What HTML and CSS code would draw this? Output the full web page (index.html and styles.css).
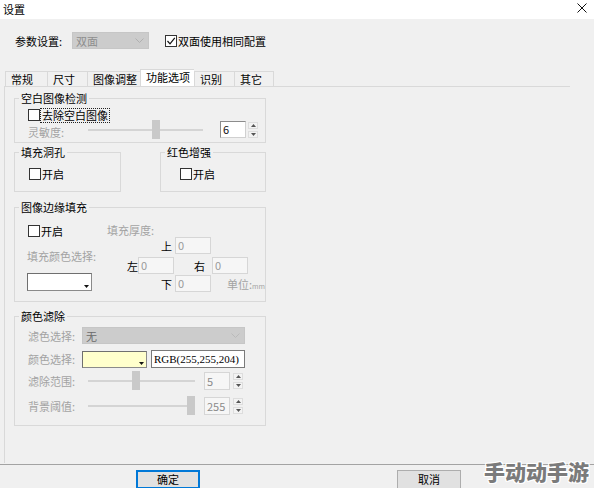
FILE: index.html
```html
<!DOCTYPE html>
<html lang="zh-CN">
<head>
<meta charset="utf-8">
<title>设置</title>
<link rel="stylesheet" href="styles.css">
</head>
<body>
<div class="titlebar">
  <span class="title">设置</span>
  <svg class="close" width="10" height="10" viewBox="0 0 10 10"><path d="M0.5 0.5 L9.5 9.5 M9.5 0.5 L0.5 9.5" stroke="#111" stroke-width="1" fill="none"/></svg>
</div>

<div class="params">
  <span class="plabel">参数设置:</span>
  <div class="combo combo-params"><span>双面</span><svg class="chev" width="9" height="5" viewBox="0 0 9 5"><path d="M0.5 0.5 L4.5 4.5 L8.5 0.5" stroke="#b0b0b0" fill="none"/></svg></div>
  <div class="check check-params"><span class="box"><svg width="10" height="10" viewBox="0 0 10 10"><path d="M1.5 5 L4 7.8 L8.8 1.8" stroke="#111" stroke-width="1.2" fill="none"/></svg></span><span>双面使用相同配置</span></div>
</div>

<div class="tabs">
  <div class="tab tw42">常规</div>
  <div class="tab tw40">尺寸</div>
  <div class="tab tw53">图像调整</div>
  <div class="tab tab-active tw54">功能选项</div>
  <div class="tab tw40">识别</div>
  <div class="tab tab-last tw40">其它</div>
</div>

<div class="panel">
  <fieldset class="group g-blank">
    <legend>空白图像检测</legend>
    <div class="cbrow cb-blank"><span class="box"></span><span class="focus">去除空白图像</span></div>
    <div class="sens">
      <span class="lbl dis sens-lbl">灵敏度:</span>
      <div class="slider slider-sens"><span class="thumb" style="margin-left:64px"></span></div>
      <div class="spin spin-sens">
        <span class="spin-input spin-active">6</span>
        <span class="spin-btns"><span class="sbtn"><svg width="5" height="3" viewBox="0 0 5 3"><path d="M0 3 L2.5 0 L5 3Z" fill="#555"/></svg></span><span class="sbtn"><svg width="5" height="3" viewBox="0 0 5 3"><path d="M0 0 L2.5 3 L5 0Z" fill="#555"/></svg></span></span>
      </div>
    </div>
  </fieldset>

  <div class="pair">
    <fieldset class="group g-hole">
      <legend>填充洞孔</legend>
      <div class="cbrow cb-hole"><span class="box"></span><span>开启</span></div>
    </fieldset>
    <fieldset class="group g-red">
      <legend>红色增强</legend>
      <div class="cbrow cb-red"><span class="box"></span><span>开启</span></div>
    </fieldset>
  </div>

  <fieldset class="group g-edge">
    <legend>图像边缘填充</legend>
    <div class="edge">
      <div class="edge-left">
        <div class="cbrow cb-edge"><span class="box"></span><span>开启</span></div>
        <div class="dis edge-color-lbl">填充颜色选择:</div>
        <div class="colorbox colorbox-white"><svg class="tri" width="5" height="3" viewBox="0 0 5 3"><path d="M0 0 L2.5 3 L5 0Z" fill="#111"/></svg></div>
      </div>
      <div class="edge-right">
        <div class="dis thick-lbl">填充厚度:</div>
        <div class="xrow xrow-top"><span class="xl">上</span><span class="tin tin-a">0</span></div>
        <div class="xrow xrow-mid"><span class="xl">左</span><span class="tin">0</span><span class="xl xl-right">右</span><span class="tin tin-r">0</span></div>
        <div class="xrow xrow-bot"><span class="xl">下</span><span class="tin tin-a">0</span><span class="dis unit">单位:<small>mm</small></span></div>
      </div>
    </div>
  </fieldset>

  <fieldset class="group g-filter">
    <legend>颜色滤除</legend>
    <div class="frow frow1">
      <span class="lbl dis flbl">滤色选择:</span>
      <div class="combo combo-filter"><span>无</span><svg class="chev" width="9" height="5" viewBox="0 0 9 5"><path d="M0.5 0.5 L4.5 4.5 L8.5 0.5" stroke="#bababa" fill="none"/></svg></div>
    </div>
    <div class="frow frow2">
      <span class="lbl dis flbl">颜色选择:</span>
      <div class="colorbox colorbox-yellow"><svg class="tri" width="5" height="3" viewBox="0 0 5 3"><path d="M0 0 L2.5 3 L5 0Z" fill="#111"/></svg></div>
      <span class="rgb">RGB(255,255,204)</span>
    </div>
    <div class="frow frow3">
      <span class="lbl dis slbl">滤除范围:</span>
      <div class="slider slider-f"><span class="thumb" style="margin-left:44px"></span></div>
      <div class="spin spin-f">
        <span class="spin-input">5</span>
        <span class="spin-btns"><span class="sbtn"><svg width="5" height="3" viewBox="0 0 5 3"><path d="M0 3 L2.5 0 L5 3Z" fill="#555"/></svg></span><span class="sbtn"><svg width="5" height="3" viewBox="0 0 5 3"><path d="M0 0 L2.5 3 L5 0Z" fill="#555"/></svg></span></span>
      </div>
    </div>
    <div class="frow frow4">
      <span class="lbl dis slbl">背景阈值:</span>
      <div class="slider slider-f"><span class="thumb" style="margin-left:99px"></span></div>
      <div class="spin spin-f">
        <span class="spin-input">255</span>
        <span class="spin-btns"><span class="sbtn"><svg width="5" height="3" viewBox="0 0 5 3"><path d="M0 3 L2.5 0 L5 3Z" fill="#555"/></svg></span><span class="sbtn"><svg width="5" height="3" viewBox="0 0 5 3"><path d="M0 0 L2.5 3 L5 0Z" fill="#555"/></svg></span></span>
      </div>
    </div>
  </fieldset>
</div>

<div class="separator"></div>

<div class="buttons">
  <button class="btn btn-ok">确定</button>
  <button class="btn btn-cancel">取消</button>
</div>

<div class="watermark">手动动手游</div>
</body>
</html>
```

FILE: styles.css
```css
* { box-sizing: border-box; }

body {
  margin: 0;
  width: 594px;
  height: 488px;
  overflow: hidden;
  position: relative;
  background: #f0f0f0;
  color: #000;
  font-family: "Noto Sans CJK SC", "Microsoft YaHei", sans-serif;
  font-size: 11px;
  line-height: 14px;
}

.titlebar {
  height: 19px;
  background: #fff;
  display: flex;
  justify-content: space-between;
  align-items: center;
  padding: 0 7px 0 3px;
}
.title { margin-top: -2px; }
.close { margin-top: -3px; }

.params {
  display: flex;
  align-items: center;
  height: 17px;
  margin-top: 13px;
  padding-left: 15px;
}
.plabel { width: 57px; }

.combo {
  height: 17px;
  background: #cccccc;
  border: 1px solid #c6c6c6;
  display: flex;
  align-items: center;
  justify-content: space-between;
  padding: 0 4px 0 3px;
  color: #8e8e8e;
}
.combo-params { width: 77px; }
.combo-filter { width: 163px; color: #6a6a6a; }

.check { display: flex; align-items: center; gap: 1px; }
.check-params { margin-left: 16px; }

.box {
  width: 12px;
  height: 12px;
  border: 1px solid #333;
  background: #fff;
  display: inline-flex;
  align-items: center;
  justify-content: center;
  flex: none;
}

.tabs {
  display: flex;
  align-items: flex-end;
  height: 17px;
  margin-top: 20px;
  padding-left: 5px;
}
.tab {
  height: 15px;
  border: 1px solid #d9d9d9;
  border-bottom: none;
  border-right: none;
  padding-left: 5px;
  line-height: 14px;
}
.tab-last { border-right: 1px solid #d9d9d9; }
.tab-active { height: 17px; background: #fff; line-height: 15px; }
.tw42 { width: 42px; }
.tw40 { width: 40px; }
.tw53 { width: 53px; }
.tw54 { width: 54px; }

.panel {
  margin-left: 4px;
  width: 566px;
  height: 377px;
  border-top: 1px solid #d9d9d9;
  border-left: 1px solid #d9d9d9;
  padding: 4px 0 0 9px;
}

.group {
  border: 1px solid #d9d9d9;
  margin: 0;
  padding: 0;
  min-width: 0;
}
.group legend {
  margin-left: 4px;
  padding: 0 2px;
  line-height: 14px;
}
.g-blank { width: 252px; height: 52px; }
.pair { display: flex; justify-content: space-between; width: 252px; margin-top: 2px; }
.g-hole { width: 107px; height: 47px; }
.g-red { width: 106px; height: 47px; }
.g-edge { width: 252px; height: 102px; margin-top: 8px; }
.g-filter { width: 252px; height: 117px; margin-top: 7px; }

.dis { color: #a3a3a3; }

.cbrow { display: flex; align-items: center; gap: 1px; height: 14px; }
.cb-blank { margin: 3px 0 0 13px; }
.cb-hole { margin: 8px 0 0 14px; }
.cb-red { margin: 8px 0 0 19px; }
.cb-edge { margin: 10px 0 0 0; }

.focus { outline: 1px dotted #222; outline-offset: 0; padding: 0 1px; line-height: 13px; }

.sens { display: flex; align-items: center; height: 19px; margin: -2px 0 0 13px; }
.lbl { flex: none; }
.sens-lbl { width: 60px; padding-top: 5px; }

.slider {
  display: flex;
  align-items: center;
  height: 19px;
  background: linear-gradient(#d4d4d4, #d4d4d4) center / 100% 2px no-repeat;
  flex: none;
}
.slider-sens { width: 115px; }
.slider-f { width: 107px; }
.thumb { width: 8px; height: 19px; background: #c9c9c9; flex: none; }

.spin { display: flex; align-items: center; gap: 2px; }
.spin-sens { margin-left: 17px; }
.spin-f { margin-left: 9px; gap: 3px; }
.spin-input {
  width: 26px;
  height: 17px;
  border: 1px solid #d6d6d6;
  background: #f6f6f6;
  color: #8a8a8a;
  padding-left: 2px;
  line-height: 15px;
}
.spin-input.spin-active {
  background: #fff;
  color: #111;
  border-color: #8c8c8c #d0d0d0 #d0d0d0 #8c8c8c;
}
.spin-f .spin-input { height: 18px; line-height: 16px; }
.spin-btns { display: flex; flex-direction: column; gap: 2px; }
.sbtn {
  width: 10px;
  height: 7px;
  border: 1px solid #dddddd;
  background: #f3f3f3;
  display: flex;
  align-items: center;
  justify-content: center;
}

.edge { display: flex; }
.edge-left { width: 92px; padding-left: 13px; display: flex; flex-direction: column; align-items: flex-start; }
.edge-color-lbl { margin-top: 11px; margin-left: -1px; }
.colorbox {
  height: 18px;
  width: 65px;
  border: 1px solid #6f6f6f;
  border-right-color: #8a8a8a;
  border-bottom-color: #8a8a8a;
  display: flex;
  align-items: flex-end;
  justify-content: flex-end;
  padding: 0 2px 2px 0;
  flex: none;
}
.colorbox-white { background: #fff; margin-top: 10px; margin-left: -1px; }
.colorbox-yellow { background: #ffffcc; height: 17px; }
.tri { display: block; }

.edge-right { display: flex; flex-direction: column; }
.thick-lbl { margin-top: 9px; }
.xrow { display: flex; align-items: center; height: 17px; }
.xrow-top { padding-left: 54px; }
.xrow-mid { padding-left: 20px; margin-top: 3px; }
.xrow-bot { padding-left: 54px; margin-top: 1px; }
.xl { width: 11px; flex: none; }
.xl-right { margin-left: 20px; }
.tin {
  width: 36px;
  height: 17px;
  border: 1px solid #d6d6d6;
  background: #f6f6f6;
  color: #9a9a9a;
  padding-left: 2px;
  line-height: 15px;
  flex: none;
}
.tin-a { margin-left: 3px; }
.tin-r { margin-left: 7px; }
.unit { margin-left: 16px; margin-top: 3px; }
.unit small { font-size: 7px; }

.frow { display: flex; align-items: center; margin-left: 13px; }
.frow1 { height: 17px; margin-top: 4px; }
.frow2 { height: 18px; margin-top: 6px; }
.frow3 { height: 19px; margin-top: 3px; }
.frow4 { height: 19px; margin-top: 6px; }
.flbl { width: 54px; }
.slbl { width: 60px; }
.rgb {
  margin-left: 4px;
  width: 94px;
  height: 18px;
  border: 1px solid #7a7a7a;
  background: #fff;
  font-family: "Liberation Serif", serif;
  font-size: 11px;
  line-height: 16px;
  padding-left: 2px;
  white-space: nowrap;
  overflow: hidden;
}

.separator { height: 1px; background: #a3a3a3; margin-top: 1px; }

.buttons { display: flex; padding-left: 136px; margin-top: 5px; }
.btn {
  width: 64px;
  height: 19px;
  background: #e1e1e1;
  border: 1px solid #adadad;
  font: inherit;
  line-height: 15px;
  padding: 0;
  color: #000;
}
.btn-ok { border-color: #0078d7; box-shadow: inset 0 0 0 1px #0078d7; }
.btn-cancel { margin-left: 197px; }

.watermark {
  position: absolute;
  right: 5px;
  bottom: 6px;
  font-size: 21px;
  line-height: 22px;
  font-weight: 900;
  color: #7b7b7b;
  text-shadow: -1px -1px 0 #fff, 1px -1px 0 #fff, -1px 1px 0 #fff, 1px 1px 0 #fff, 0 1px 0 #fff, 1px 0 0 #fff, 0 -1px 0 #fff, -1px 0 0 #fff;
}
```
